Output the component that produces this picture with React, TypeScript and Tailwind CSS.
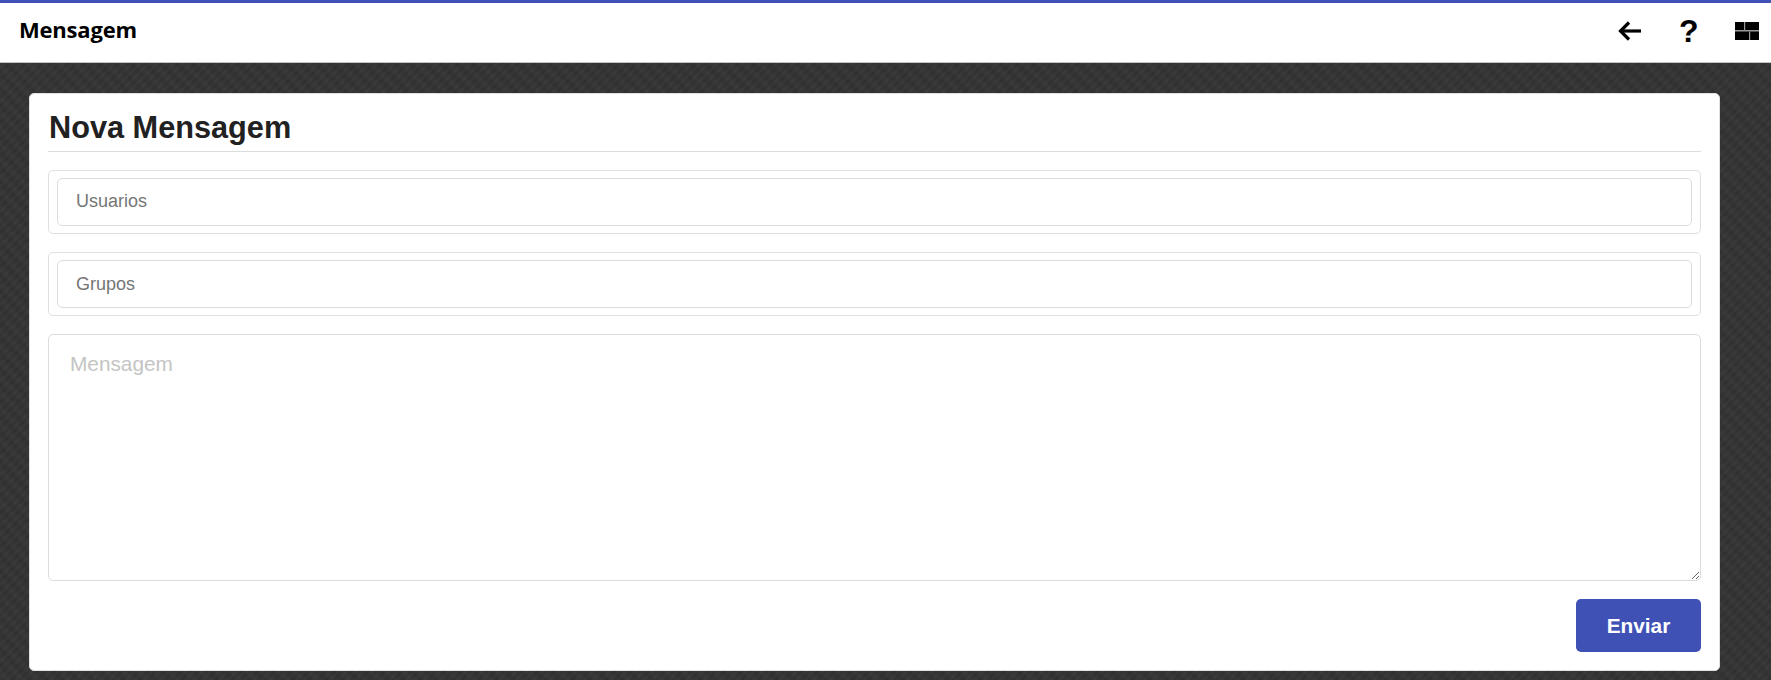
import React from "react";

const FONT = "font-['Liberation_Sans',Arial,sans-serif]";

const PickerField: React.FC<{ placeholder: string; className?: string; inputClass?: string }> = ({
  placeholder,
  className,
  inputClass,
}) => (
  <div className={`border border-[#e0e0e0] rounded-[5px] py-[7px] px-[8px] ${className ?? ""}`}>
    <input
      placeholder={placeholder}
      className={`block w-full h-[48px] border border-[#dcdcdc] rounded-[5px] px-[18px] text-[18px] text-[#757575] placeholder:text-[#757575] outline-none ${inputClass ?? ""}`}
    />
  </div>
);

const BackIcon = () => (
  <svg width="26" height="24" viewBox="0 0 26 24" fill="none" stroke="#000" strokeWidth="3.2">
    <path d="M25 12H4" />
    <path d="M13 3.5l-8.5 8.5 8.5 8.5" />
  </svg>
);

const TilesIcon = () => (
  <svg width="24" height="18" viewBox="0 0 24 18" fill="#000">
    <rect width="24" height="18" />
    <rect x="0" y="8" width="24" height="1.5" fill="#999" />
    <rect x="9" y="0" width="1.2" height="8" fill="#999" />
    <rect x="14" y="9.5" width="1.2" height="8.5" fill="#999" />
  </svg>
);

export default function App() {
  return (
    <div
      className={`h-[680px] flex flex-col overflow-hidden bg-[#333333] bg-[repeating-linear-gradient(135deg,rgba(255,255,255,0.025)_0px,rgba(0,0,0,0.04)_3px,rgba(255,255,255,0.025)_6px),repeating-linear-gradient(45deg,rgba(0,0,0,0.05)_0px,rgba(255,255,255,0.02)_5px,rgba(0,0,0,0.05)_11px)] ${FONT}`}
    >
      {/* Header */}
      <header className="h-[63px] shrink-0 bg-white border-t-[3px] border-t-[#3f51b5] border-b border-b-[#c4c4c4] flex items-start justify-between">
        <h1 className="ml-[19px] mt-[11px] text-[22px] leading-[30px] font-bold text-black font-['Open_Sans',sans-serif] tracking-[-0.2px]">
          Mensagem
        </h1>
        <div className="flex items-center h-[24px] mt-[16px] mr-[12px]">
          <BackIcon />
          <span className="ml-[37px] w-[19px] text-center text-[32px] leading-[24px] font-bold text-black">
            ?
          </span>
          <span className="ml-[37px] flex">
            <TilesIcon />
          </span>
        </div>
      </header>

      {/* Card */}
      <main className="mt-[30px] ml-[29px] w-[1691px] h-[578px] bg-white rounded-[5px] border border-[#e0e0e0] px-[18px] pt-[8px]">
        <h2 className="text-[30.7px] leading-[52px] pl-[1px] font-bold text-[#212121] border-b border-b-[#dcdcdc] h-[50px]">
          Nova Mensagem
        </h2>
        <PickerField placeholder="Usuarios" className="mt-[18px] h-[64px]" inputClass="pb-[2px]" />
        <PickerField placeholder="Grupos" className="mt-[18px] h-[64px]" />
        <textarea
          placeholder="Mensagem"
          className="block mt-[18px] w-full h-[247px] border border-[#dcdcdc] rounded-[5px] px-[21px] pt-[17px] pb-[15px] text-[20.8px] leading-[24px] placeholder:text-[#c4c4c4] outline-none"
        />
        <div className="flex justify-end mt-[18px]">
          <button className="w-[125px] h-[53px] rounded-[5px] bg-[#3f51b5] text-white text-[20.8px] font-bold">
            Enviar
          </button>
        </div>
      </main>
    </div>
  );
}
